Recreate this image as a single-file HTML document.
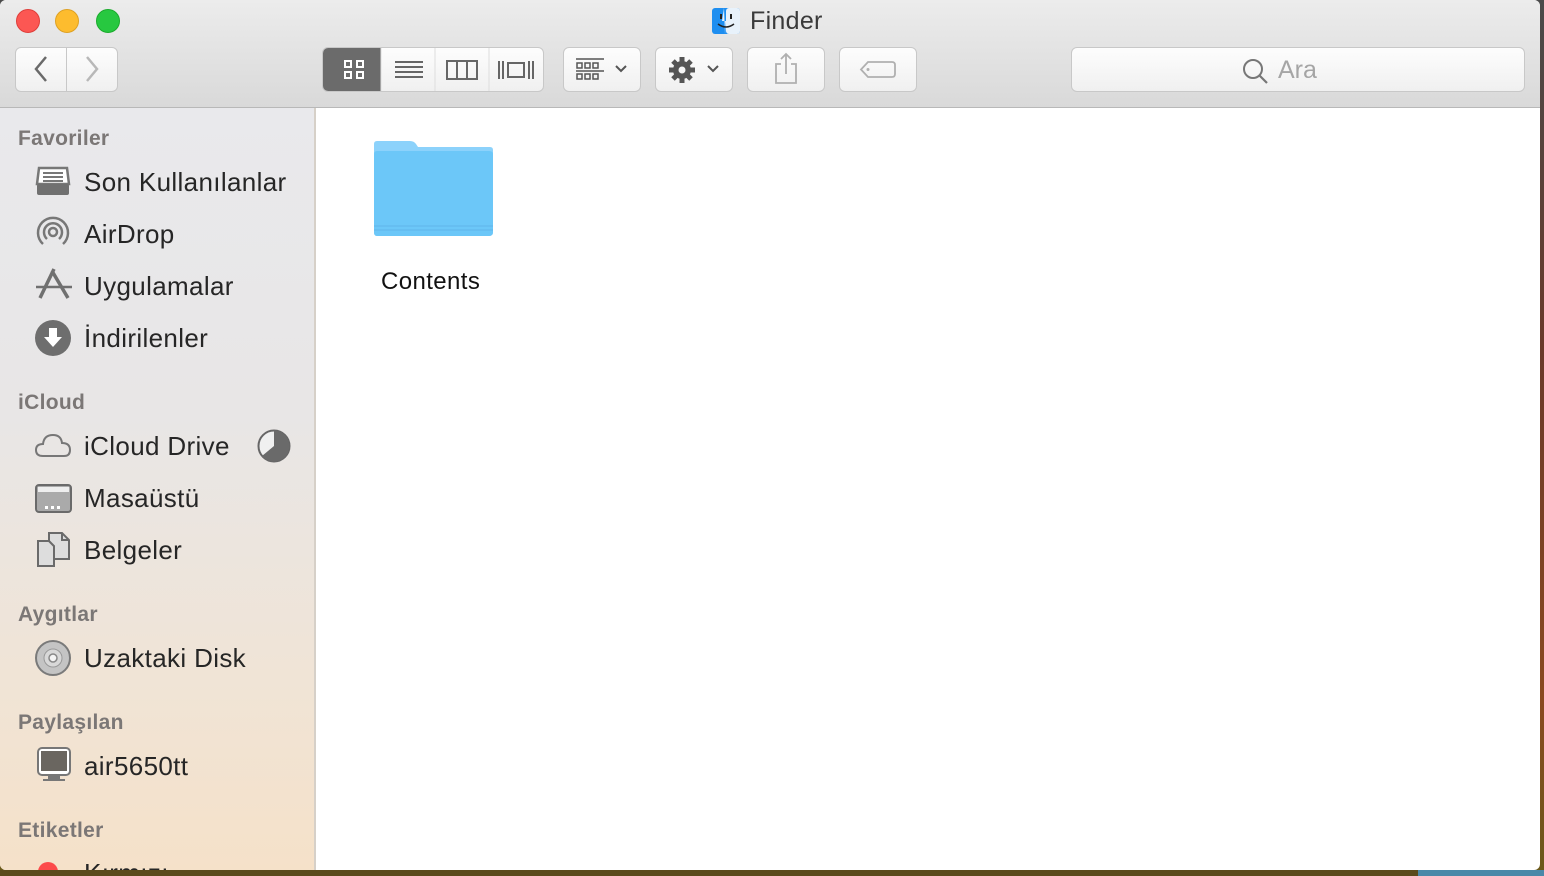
<!DOCTYPE html>
<html><head><meta charset="utf-8"><style>
*{margin:0;padding:0;box-sizing:border-box}
body{width:1544px;height:876px;overflow:hidden;position:relative;font-family:"Liberation Sans",sans-serif;background:linear-gradient(#4a4a4a,#6a3a2a 40%,#8a4a20 80%,#6a5a1a)}
.bottom{position:absolute;left:0;top:870px;width:1544px;height:6px;background:#5a4a1c}
.bottom:after{content:"";position:absolute;left:1418px;top:0;width:126px;height:6px;background:#4a88a8}
.win{position:absolute;left:0;top:0;width:1540px;height:870px;background:#fff;border-radius:6px 6px 6px 6px;overflow:hidden}
.tb{position:absolute;left:0;top:0;width:1540px;height:108px;background:linear-gradient(#ececec,#d9d9d9);border-bottom:1px solid #b8b8b8}
.dot{position:absolute;top:9px;width:24px;height:24px;border-radius:50%}
.title{position:absolute;left:750px;top:7px;font-size:25px;color:#3a3a3a;letter-spacing:0.3px}
.btn{position:absolute;top:47px;height:45px;background:linear-gradient(#fdfdfd,#f0f0f0);border:1px solid #c8c8c8;border-radius:6px}
.side{position:absolute;left:0;top:108px;width:316px;height:762px;background:linear-gradient(#e9e9ec 0%,#e8e6e6 40%,#f0e4d6 75%,#f5e1c9 100%);border-right:2px solid #d6d0c8}
.h{position:absolute;left:18px;font-size:21px;font-weight:bold;color:#7b7776;letter-spacing:0.3px}
.it{position:absolute;left:84px;font-size:26px;color:#262626;letter-spacing:0.35px}
.ic{position:absolute;left:34px}
</style></head><body>
<div class="bottom"></div>
<div class="win">
<div class="tb">
 <div class="dot" style="left:16px;background:#fc5753;border:1px solid #df3e3a"></div>
 <div class="dot" style="left:55px;background:#fdbc2e;border:1px solid #dea123"></div>
 <div class="dot" style="left:96px;background:#27c840;border:1px solid #1aab2c"></div>
 <svg style="position:absolute;left:712px;top:8px" width="28" height="26"><rect x="0" y="0" width="28" height="26" rx="3" fill="#1e8ef0"/><rect x="14" y="0" width="14" height="26" rx="3" fill="#e8f2fb"/><path d="M12 0 L10 13 L14 13 L13 26" fill="#e8f2fb"/><path d="M6 16 Q14 22 22 16" stroke="#222" stroke-width="1.5" fill="none"/><rect x="8" y="6" width="2" height="5" fill="#222"/><rect x="18" y="6" width="2" height="5" fill="#222"/></svg>
 <div class="title">Finder</div>
 <div class="btn" style="left:15px;width:52px;border-radius:6px 0 0 6px"><svg width="50" height="43"><path d="M30 9 L20 21 L30 33" stroke="#6a6a6a" stroke-width="2.5" fill="none"/></svg></div>
 <div class="btn" style="left:66px;width:52px;border-radius:0 6px 6px 0"><svg width="50" height="43"><path d="M20 9 L30 21 L20 33" stroke="#b8b8b8" stroke-width="2.5" fill="none"/></svg></div>
 <div class="btn" style="left:322px;width:222px;overflow:hidden">
  <div style="position:absolute;left:0;top:0;width:58px;height:45px;background:#6b6b6b"></div>
  <svg style="position:absolute;left:0;top:0" width="222" height="45">
   <g fill="none" stroke="#fff" stroke-width="2"><rect x="22" y="13" width="6" height="6"/><rect x="34" y="13" width="6" height="6"/><rect x="22" y="24" width="6" height="6"/><rect x="34" y="24" width="6" height="6"/></g>
   <g stroke="#666" stroke-width="2"><line x1="72" y1="14" x2="100" y2="14"/><line x1="72" y1="19" x2="100" y2="19"/><line x1="72" y1="24" x2="100" y2="24"/><line x1="72" y1="29" x2="100" y2="29"/></g>
   <line x1="112" y1="0" x2="112" y2="45" stroke="#ddd"/><line x1="166" y1="0" x2="166" y2="45" stroke="#ddd"/><line x1="58" y1="0" x2="58" y2="45" stroke="#ddd"/>
   <g fill="none" stroke="#666" stroke-width="2"><rect x="124" y="13" width="30" height="18"/><line x1="134" y1="13" x2="134" y2="31"/><line x1="144" y1="13" x2="144" y2="31"/></g>
   <g fill="none" stroke="#666" stroke-width="2"><line x1="176" y1="13" x2="176" y2="31"/><line x1="180" y1="13" x2="180" y2="31"/><rect x="185" y="15" width="16" height="14"/><line x1="206" y1="13" x2="206" y2="31"/><line x1="210" y1="13" x2="210" y2="31"/></g>
  </svg></div>
 <div class="btn" style="left:563px;width:78px"><svg width="76" height="43"><g fill="none" stroke="#555" stroke-width="1.5"><line x1="12" y1="11" x2="40" y2="11"/><rect x="13" y="15" width="5" height="5"/><rect x="21" y="15" width="5" height="5"/><rect x="29" y="15" width="5" height="5"/><line x1="12" y1="23" x2="40" y2="23"/><rect x="13" y="26" width="5" height="5"/><rect x="21" y="26" width="5" height="5"/><rect x="29" y="26" width="5" height="5"/><path d="M52 18 L57 23 L62 18" stroke-width="2"/></g></svg></div>
 <div class="btn" style="left:655px;width:78px"><svg width="76" height="43"><g transform="translate(26,22)"><circle r="9" fill="#555"/><g stroke="#555" stroke-width="5"><line x1="0" y1="-13" x2="0" y2="13"/><line x1="-13" y1="0" x2="13" y2="0"/><line x1="-9" y1="-9" x2="9" y2="9"/><line x1="-9" y1="9" x2="9" y2="-9"/></g><circle r="3.5" fill="#f5f5f5"/></g><path d="M52 18 L57 23 L62 18" stroke="#555" stroke-width="2" fill="none"/></svg></div>
 <div class="btn" style="left:747px;width:78px"><svg width="76" height="43"><g fill="none" stroke="#b0b0b0" stroke-width="1.8"><path d="M33 16 L28 16 L28 35 L48 35 L48 16 L43 16"/><path d="M38 26 L38 6 M33 11 L38 6 L43 11"/></g></svg></div>
 <div class="btn" style="left:839px;width:78px"><svg width="76" height="43"><path d="M28 14 L52 14 Q55 14 55 17 L55 26 Q55 29 52 29 L28 29 L21 21.5 Z" fill="none" stroke="#b0b0b0" stroke-width="1.8"/><circle cx="28" cy="21.5" r="1.5" fill="#b0b0b0"/></svg></div>
 <div class="btn" style="left:1071px;width:454px"><svg style="position:absolute;left:170px;top:10px" width="28" height="28"><circle cx="11" cy="11" r="9" fill="none" stroke="#777" stroke-width="2"/><line x1="17.5" y1="17.5" x2="25" y2="25" stroke="#777" stroke-width="2.2"/></svg><span style="position:absolute;left:206px;top:8px;font-size:25px;color:#a5a5a5">Ara</span></div>
</div>
<div class="side">
 <div class="h" style="top:19px">Favoriler</div>
 <svg class="ic" style="top:56px" width="38" height="34"><path d="M5 4 L33 4 L35 20 L3 20 Z" fill="#fff" stroke="#777" stroke-width="2.5"/><g stroke="#777" stroke-width="2"><line x1="9" y1="9" x2="29" y2="9"/><line x1="9" y1="13" x2="29" y2="13"/><line x1="9" y1="17" x2="29" y2="17"/></g><rect x="3" y="20" width="32" height="11" rx="2" fill="#707070"/></svg>
 <div class="it" style="top:59px">Son Kullanılanlar</div>
 <svg class="ic" style="top:106px" width="38" height="36"><g fill="none" stroke="#777" stroke-width="2.5"><path d="M9 30 A15 15 0 1 1 29 30"/><path d="M13 25 A9 9 0 1 1 25 25"/></g><circle cx="19" cy="18" r="4" fill="none" stroke="#777" stroke-width="2.5"/></svg>
 <div class="it" style="top:111px">AirDrop</div>
 <svg class="ic" style="top:158px" width="40" height="36"><g stroke="#707070" stroke-width="3.5" fill="none"><line x1="20" y1="3" x2="6" y2="32"/><line x1="18" y1="5" x2="34" y2="32"/><line x1="2" y1="21" x2="38" y2="21" stroke-width="2.5"/></g></svg>
 <div class="it" style="top:163px">Uygulamalar</div>
 <svg class="ic" style="top:211px" width="38" height="38"><circle cx="19" cy="19" r="18" fill="#6e6e6e"/><path d="M15 9 L23 9 L23 18 L28 18 L19 28 L10 18 L15 18 Z" fill="#fff"/></svg>
 <div class="it" style="top:215px">İndirilenler</div>
 <div class="h" style="top:283px">iCloud</div>
 <svg class="ic" style="top:322px" width="38" height="30"><path d="M9 26 Q2 26 2 20 Q2 14 9 14 Q10 5 19 5 Q27 5 28 13 Q36 13 36 20 Q36 26 30 26 Z" fill="none" stroke="#777" stroke-width="2"/></svg>
 <div class="it" style="top:323px">iCloud Drive</div>
 <svg style="position:absolute;left:257px;top:321px" width="34" height="34"><circle cx="17" cy="17" r="15.5" fill="#f0f0f0" stroke="#666" stroke-width="2"/><path d="M17 17 L17 1.5 A15.5 15.5 0 1 1 5 27 Z" fill="#6a6a6a"/></svg>
 <svg class="ic" style="top:374px" width="40" height="32"><rect x="2" y="3" width="35" height="27" rx="3" fill="#aaa" stroke="#6a6a6a" stroke-width="2"/><rect x="4" y="5" width="31" height="5" fill="#eee"/><g fill="#fff"><rect x="11" y="24" width="3" height="3"/><rect x="17" y="24" width="3" height="3"/><rect x="23" y="24" width="3" height="3"/></g></svg>
 <div class="it" style="top:375px">Masaüstü</div>
 <svg class="ic" style="top:423px" width="40" height="38"><g fill="#ddd" stroke="#6a6a6a" stroke-width="2"><path d="M4 10 L15 10 L20 15 L20 35 L4 35 Z"/><path d="M15 2 L28 2 L35 9 L35 28 L20 28 L20 15 L15 10 Z"/><path d="M28 2 L28 9 L35 9" fill="none"/></g></svg>
 <div class="it" style="top:427px">Belgeler</div>
 <div class="h" style="top:495px">Aygıtlar</div>
 <svg class="ic" style="top:531px" width="38" height="38"><circle cx="19" cy="19" r="17" fill="#c4c4c4" stroke="#7a7a7a" stroke-width="2"/><circle cx="19" cy="19" r="9" fill="#d8d8d8" stroke="#999" stroke-width="1"/><circle cx="19" cy="19" r="4" fill="#f4f4f4" stroke="#888" stroke-width="1.5"/></svg>
 <div class="it" style="top:535px">Uzaktaki Disk</div>
 <div class="h" style="top:603px">Paylaşılan</div>
 <svg class="ic" style="top:638px" width="40" height="38"><rect x="4" y="2" width="32" height="27" rx="4" fill="#fff" stroke="#777" stroke-width="2"/><rect x="7" y="5" width="26" height="20" fill="#6a6660"/><rect x="14" y="30" width="12" height="3" fill="#777"/><rect x="9" y="33" width="22" height="2" fill="#777"/></svg>
 <div class="it" style="top:643px">air5650tt</div>
 <div class="h" style="top:711px">Etiketler</div>
 <div style="position:absolute;left:38px;top:754px;width:20px;height:20px;border-radius:50%;background:#fc4a4a"></div>
 <div class="it" style="top:750px">Kırmızı</div>
</div>
<svg style="position:absolute;left:372px;top:140px" width="122" height="98"><path d="M2 4 Q2 1 5 1 L38 1 Q42 1 44 4 L46 7 L118 7 Q121 7 121 10 L121 92 Q121 96 117 96 L5 96 Q2 96 2 92 Z" fill="#8cd2fb"/><path d="M2 14 Q2 11 5 11 L117 11 Q121 11 121 14 L121 92 Q121 96 117 96 L5 96 Q2 96 2 92 Z" fill="#6cc7f8"/><line x1="2" y1="86" x2="121" y2="86" stroke="#5fb6ea" stroke-width="1"/><line x1="2" y1="90" x2="121" y2="90" stroke="#5fb6ea" stroke-width="1"/></svg>
<div style="position:absolute;left:381px;top:268px;font-size:24px;color:#111;letter-spacing:0.4px">Contents</div>
</div>
</body></html>
